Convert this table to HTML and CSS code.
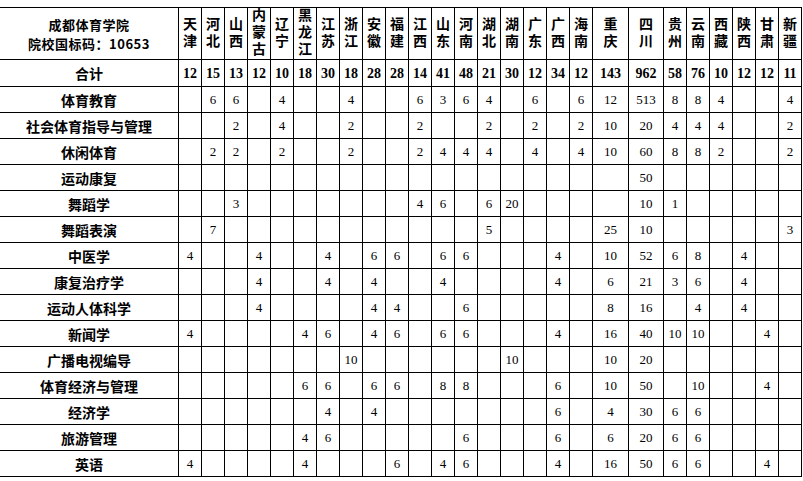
FILE: index.html
```html
<!DOCTYPE html>
<html lang="zh-CN">
<head>
<meta charset="utf-8">
<title>成都体育学院 分省招生计划</title>
<link rel="stylesheet" href="styles.css">
</head>
<body>
<table class="plan">
<colgroup>
<col class="c-name">
<col class="c-n"><col class="c-n"><col class="c-n"><col class="c-n"><col class="c-n"><col class="c-n"><col class="c-n"><col class="c-n"><col class="c-n"><col class="c-n"><col class="c-n"><col class="c-n"><col class="c-n"><col class="c-n"><col class="c-n"><col class="c-n"><col class="c-n"><col class="c-n">
<col class="c-cq"><col class="c-sc">
<col class="c-n"><col class="c-n"><col class="c-n"><col class="c-n"><col class="c-n"><col class="c-n">
</colgroup>
<thead>
<tr class="r-head">
<th class="school"><span class="line">成都体育学院</span><span class="line">院校国标码：10653</span></th>
<th><span class="v">天津</span></th><th><span class="v">河北</span></th><th><span class="v">山西</span></th><th><span class="v">内蒙古</span></th><th><span class="v">辽宁</span></th><th><span class="v">黑龙江</span></th><th><span class="v">江苏</span></th><th><span class="v">浙江</span></th><th><span class="v">安徽</span></th><th><span class="v">福建</span></th><th><span class="v">江西</span></th><th><span class="v">山东</span></th><th><span class="v">河南</span></th><th><span class="v">湖北</span></th><th><span class="v">湖南</span></th><th><span class="v">广东</span></th><th><span class="v">广西</span></th><th><span class="v">海南</span></th><th><span class="v">重庆</span></th><th><span class="v">四川</span></th><th><span class="v">贵州</span></th><th><span class="v">云南</span></th><th><span class="v">西藏</span></th><th><span class="v">陕西</span></th><th><span class="v">甘肃</span></th><th><span class="v">新疆</span></th>
</tr>
</thead>
<tbody>
<tr class="r-total">
<th class="name">合计</th>
<td>12</td><td>15</td><td>13</td><td>12</td><td>10</td><td>18</td><td>30</td><td>18</td><td>28</td><td>28</td><td>14</td><td>41</td><td>48</td><td>21</td><td>30</td><td>12</td><td>34</td><td>12</td><td>143</td><td>962</td><td>58</td><td>76</td><td>10</td><td>12</td><td>12</td><td>11</td>
</tr>
<tr>
<th class="name">体育教育</th>
<td></td><td>6</td><td>6</td><td></td><td>4</td><td></td><td></td><td>4</td><td></td><td></td><td>6</td><td>3</td><td>6</td><td>4</td><td></td><td>6</td><td></td><td>6</td><td>12</td><td>513</td><td>8</td><td>8</td><td>4</td><td></td><td></td><td>4</td>
</tr>
<tr>
<th class="name">社会体育指导与管理</th>
<td></td><td></td><td>2</td><td></td><td>4</td><td></td><td></td><td>2</td><td></td><td></td><td>2</td><td></td><td></td><td>2</td><td></td><td>2</td><td></td><td>2</td><td>10</td><td>20</td><td>4</td><td>4</td><td>4</td><td></td><td></td><td>2</td>
</tr>
<tr>
<th class="name">休闲体育</th>
<td></td><td>2</td><td>2</td><td></td><td>2</td><td></td><td></td><td>2</td><td></td><td></td><td>2</td><td>4</td><td>4</td><td>4</td><td></td><td>4</td><td></td><td>4</td><td>10</td><td>60</td><td>8</td><td>8</td><td>2</td><td></td><td></td><td>2</td>
</tr>
<tr>
<th class="name">运动康复</th>
<td></td><td></td><td></td><td></td><td></td><td></td><td></td><td></td><td></td><td></td><td></td><td></td><td></td><td></td><td></td><td></td><td></td><td></td><td></td><td>50</td><td></td><td></td><td></td><td></td><td></td><td></td>
</tr>
<tr>
<th class="name">舞蹈学</th>
<td></td><td></td><td>3</td><td></td><td></td><td></td><td></td><td></td><td></td><td></td><td>4</td><td>6</td><td></td><td>6</td><td>20</td><td></td><td></td><td></td><td></td><td>10</td><td>1</td><td></td><td></td><td></td><td></td><td></td>
</tr>
<tr>
<th class="name">舞蹈表演</th>
<td></td><td>7</td><td></td><td></td><td></td><td></td><td></td><td></td><td></td><td></td><td></td><td></td><td></td><td>5</td><td></td><td></td><td></td><td></td><td>25</td><td>10</td><td></td><td></td><td></td><td></td><td></td><td>3</td>
</tr>
<tr>
<th class="name">中医学</th>
<td>4</td><td></td><td></td><td>4</td><td></td><td></td><td>4</td><td></td><td>6</td><td>6</td><td></td><td>6</td><td>6</td><td></td><td></td><td></td><td>4</td><td></td><td>10</td><td>52</td><td>6</td><td>8</td><td></td><td>4</td><td></td><td></td>
</tr>
<tr>
<th class="name">康复治疗学</th>
<td></td><td></td><td></td><td>4</td><td></td><td></td><td>4</td><td></td><td>4</td><td></td><td></td><td>4</td><td></td><td></td><td></td><td></td><td>4</td><td></td><td>6</td><td>21</td><td>3</td><td>6</td><td></td><td>4</td><td></td><td></td>
</tr>
<tr>
<th class="name">运动人体科学</th>
<td></td><td></td><td></td><td>4</td><td></td><td></td><td></td><td></td><td>4</td><td>4</td><td></td><td></td><td>6</td><td></td><td></td><td></td><td></td><td></td><td>8</td><td>16</td><td></td><td>4</td><td></td><td>4</td><td></td><td></td>
</tr>
<tr>
<th class="name">新闻学</th>
<td>4</td><td></td><td></td><td></td><td></td><td>4</td><td>6</td><td></td><td>4</td><td>6</td><td></td><td>6</td><td>6</td><td></td><td></td><td></td><td>4</td><td></td><td>16</td><td>40</td><td>10</td><td>10</td><td></td><td></td><td>4</td><td></td>
</tr>
<tr>
<th class="name">广播电视编导</th>
<td></td><td></td><td></td><td></td><td></td><td></td><td></td><td>10</td><td></td><td></td><td></td><td></td><td></td><td></td><td>10</td><td></td><td></td><td></td><td>10</td><td>20</td><td></td><td></td><td></td><td></td><td></td><td></td>
</tr>
<tr>
<th class="name">体育经济与管理</th>
<td></td><td></td><td></td><td></td><td></td><td>6</td><td>6</td><td></td><td>6</td><td>6</td><td></td><td>8</td><td>8</td><td></td><td></td><td></td><td>6</td><td></td><td>10</td><td>50</td><td></td><td>10</td><td></td><td></td><td>4</td><td></td>
</tr>
<tr>
<th class="name">经济学</th>
<td></td><td></td><td></td><td></td><td></td><td></td><td>4</td><td></td><td>4</td><td></td><td></td><td></td><td></td><td></td><td></td><td></td><td>6</td><td></td><td>4</td><td>30</td><td>6</td><td>6</td><td></td><td></td><td></td><td></td>
</tr>
<tr>
<th class="name">旅游管理</th>
<td></td><td></td><td></td><td></td><td></td><td>4</td><td>6</td><td></td><td></td><td></td><td></td><td></td><td>6</td><td></td><td></td><td></td><td>6</td><td></td><td>6</td><td>20</td><td>6</td><td>6</td><td></td><td></td><td></td><td></td>
</tr>
<tr>
<th class="name">英语</th>
<td>4</td><td></td><td></td><td></td><td></td><td>4</td><td></td><td></td><td></td><td>6</td><td></td><td>4</td><td>6</td><td></td><td></td><td></td><td>4</td><td></td><td>16</td><td>50</td><td>6</td><td>6</td><td></td><td></td><td>4</td><td></td>
</tr>
</tbody>
</table>
</body>
</html>
```

FILE: styles.css
```css
html, body {
  margin: 0;
  padding: 0;
  background: #fff;
}

.plan {
  border-collapse: collapse;
  table-layout: fixed;
  width: 802px;
  margin: 7px 0 0 -1px;
  color: #000;
  font-family: "Liberation Serif", "Noto Sans CJK SC", serif;
  font-size: 13px;
}

.c-name { width: 179px; }
.c-n { width: 23px; }
.c-cq { width: 36px; }
.c-sc { width: 35px; }

.plan th,
.plan td {
  border: 1px solid #000;
  padding: 0;
  text-align: center;
  vertical-align: middle;
  overflow: hidden;
  white-space: nowrap;
}

.plan th {
  font-family: "Noto Sans CJK SC", sans-serif;
  font-weight: 700;
  font-size: 14px;
  line-height: 20px;
}

.r-head th {
  height: 51px;
  line-height: 0;
}

.r-head th.school {
  font-size: 13px;
  letter-spacing: 0.5px;
}

.school .line {
  display: block;
  height: 19px;
  line-height: 19px;
}

.v {
  display: inline-block;
  vertical-align: middle;
  writing-mode: vertical-rl;
  text-orientation: upright;
  letter-spacing: 3px;
  line-height: 20px;
  font-size: 14px;
}

.r-total th,
.r-total td {
  height: 26px;
}

.r-total td {
  font-family: "Liberation Serif", serif;
  font-weight: 700;
  font-size: 14px;
}

tbody tr th,
tbody tr td {
  height: 25px;
}

.plan td {
  line-height: 15px;
}
```
